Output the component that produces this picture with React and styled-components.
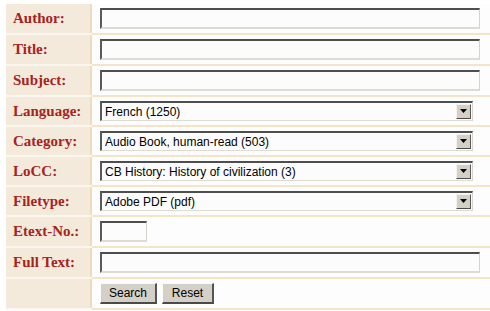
import styled, { createGlobalStyle } from "styled-components";

const GlobalStyle = createGlobalStyle`
  html, body {
    margin: 0;
    padding: 0;
    background: #ffffff;
  }
`

const Page = styled.div`
  padding: 4px 0 0 6px;
  overflow: hidden;
`

const Table = styled.table`
  width: 484px;
  border-collapse: collapse;
  border-spacing: 0;
`

const LabelCell = styled.th`
  width: 77px;
  height: ${props => props.$h}px;
  padding: 0 0 0 7px;
  background: #f4eadb;
  border-bottom: 2px solid #fbf6ee;
  text-align: left;
  vertical-align: middle;
  font-family: "Liberation Serif", "Times New Roman", serif;
  font-weight: bold;
  font-size: 15px;
  color: #a8221e;
  white-space: nowrap;
`

const FieldCell = styled.td`
  padding: 0 0 0 8px;
  background: #fdfdfd;
  border-left: 2px solid #efdcbb;
  border-bottom: 2px solid #f4e4c8;
  vertical-align: middle;
`

const TextInput = styled.input`
  display: block;
  box-sizing: border-box;
  width: ${props => props.$w}px;
  height: 21px;
  margin: 0;
  padding: 0 3px;
  background: #fcfcfc;
  border-style: solid;
  border-width: 2px 1px 2px 2px;
  border-color: #4e4e4e #d6d3cc #dedbd4 #5a5a5a;
  font-family: "Liberation Sans", Arial, sans-serif;
  font-size: 12px;
  outline: none;
`

const SelectBox = styled.div`
  display: flex;
  align-items: center;
  box-sizing: border-box;
  width: 373px;
  height: 20px;
  padding: 0 1px 0 3px;
  background: #fcfcfc;
  border-style: solid;
  border-width: 2px 1px 1px 2px;
  border-color: #4e4e4e #d6d3cc #dedbd4 #5a5a5a;
  font-family: "Liberation Sans", Arial, sans-serif;
  font-size: 12px;
  color: #000;
`

const SelectValue = styled.span`
  flex: 1;
  white-space: nowrap;
  overflow: hidden;
`

const ArrowButton = styled.span`
  display: flex;
  align-items: center;
  justify-content: center;
  box-sizing: border-box;
  width: 15px;
  height: 15px;
  background: #d4d0c8;
  border-style: solid;
  border-width: 1px;
  border-color: #f4f2ee #5a5a5a #4a4a4a #f4f2ee;
`

const ButtonRow = styled.div`
  display: flex;
  gap: 5px;
`

const Button = styled.button`
  box-sizing: border-box;
  width: ${props => props.$w}px;
  height: 21px;
  margin: 0;
  padding: 0;
  background: #d4d0c8;
  border-style: solid;
  border-width: 1px 2px 2px 1px;
  border-color: #fbfaf8 #555 #4a4a4a #fbfaf8;
  font-family: "Liberation Sans", Arial, sans-serif;
  font-size: 12px;
  color: #000;
`

function Arrow() {
  return (
    <ArrowButton>
      <svg width="7" height="5" viewBox="0 0 7 5">
        <polygon points="0,0 7,0 3.5,4" fill="#000" />
      </svg>
    </ArrowButton>
  )
}

function Dropdown({ value }) {
  return (
    <SelectBox>
      <SelectValue>{value}</SelectValue>
      <Arrow />
    </SelectBox>
  )
}

export default function App() {
  return (
    <Page>
      <GlobalStyle />
      <Table>
        <tbody>
          <tr>
            <LabelCell $h={29}>Author:</LabelCell>
            <FieldCell><TextInput $w={380} /></FieldCell>
          </tr>
          <tr>
            <LabelCell $h={29}>Title:</LabelCell>
            <FieldCell><TextInput $w={380} /></FieldCell>
          </tr>
          <tr>
            <LabelCell $h={29}>Subject:</LabelCell>
            <FieldCell><TextInput $w={380} /></FieldCell>
          </tr>
          <tr>
            <LabelCell $h={28}>Language:</LabelCell>
            <FieldCell><Dropdown value="French (1250)" /></FieldCell>
          </tr>
          <tr>
            <LabelCell $h={28}>Category:</LabelCell>
            <FieldCell><Dropdown value="Audio Book, human-read (503)" /></FieldCell>
          </tr>
          <tr>
            <LabelCell $h={28}>LoCC:</LabelCell>
            <FieldCell><Dropdown value="CB History: History of civilization (3)" /></FieldCell>
          </tr>
          <tr>
            <LabelCell $h={28}>Filetype:</LabelCell>
            <FieldCell><Dropdown value="Adobe PDF (pdf)" /></FieldCell>
          </tr>
          <tr>
            <LabelCell $h={29}>Etext-No.:</LabelCell>
            <FieldCell><TextInput $w={47} /></FieldCell>
          </tr>
          <tr>
            <LabelCell $h={29}>Full Text:</LabelCell>
            <FieldCell><TextInput $w={380} /></FieldCell>
          </tr>
          <tr>
            <LabelCell $h={29}></LabelCell>
            <FieldCell>
              <ButtonRow>
                <Button $w={57}>Search</Button>
                <Button $w={52}>Reset</Button>
              </ButtonRow>
            </FieldCell>
          </tr>
        </tbody>
      </Table>
    </Page>
  )
}
